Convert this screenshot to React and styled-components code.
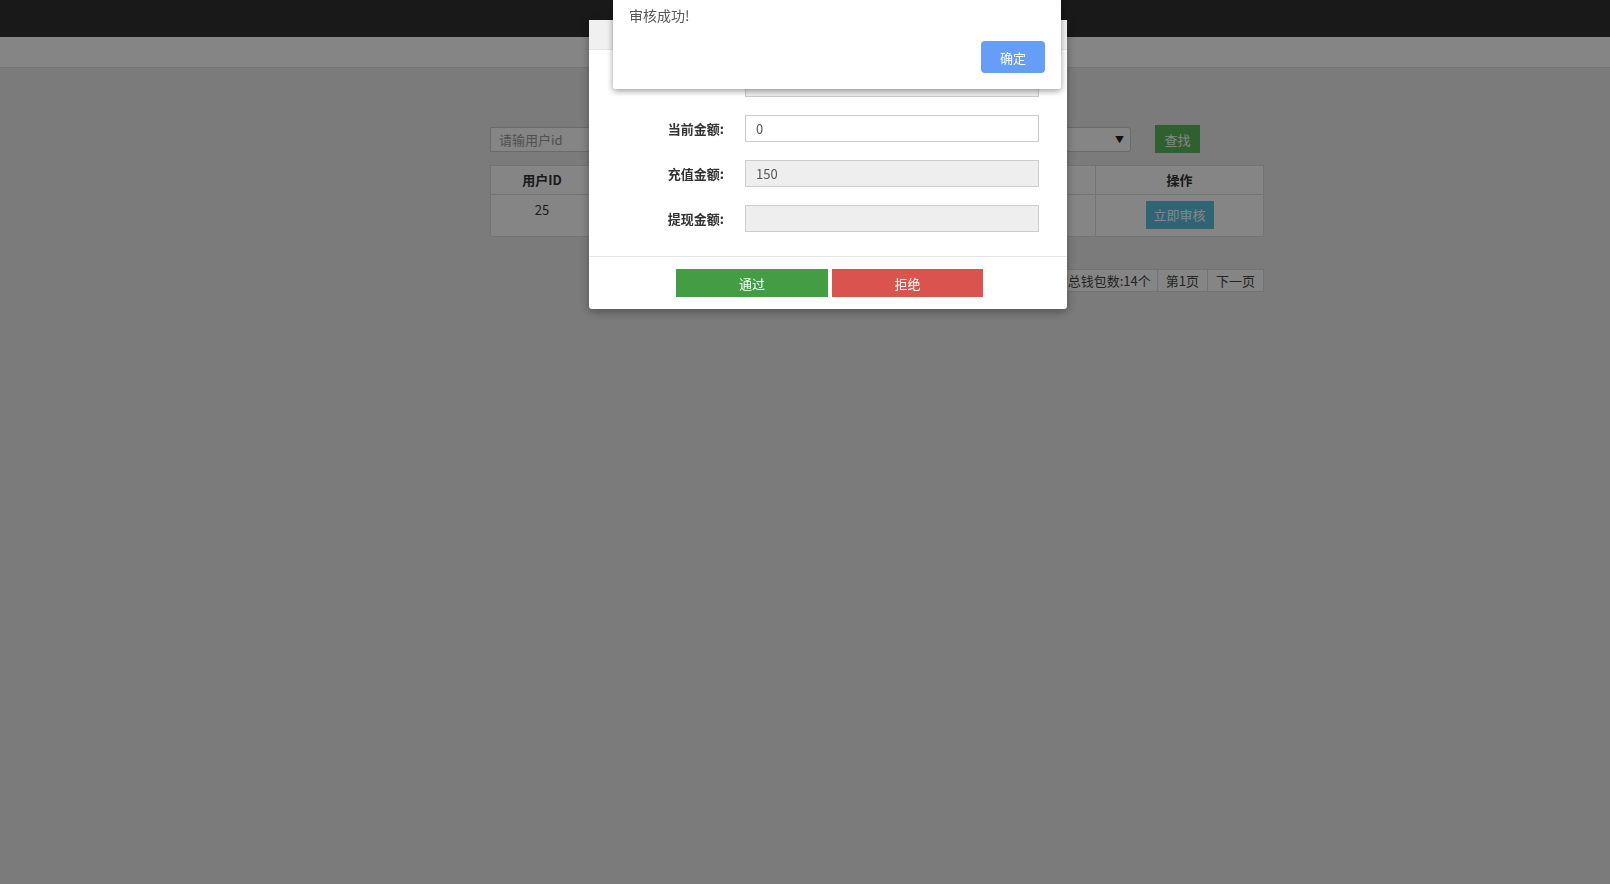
import React from 'react'
import styled, { createGlobalStyle } from 'styled-components'

const Global = createGlobalStyle`
  html, body {
    margin: 0;
    padding: 0;
    background: #ececec;
    font-family: "Noto Sans CJK SC", "Liberation Sans", sans-serif;
    font-size: 13px;
    color: #333;
  }
`

const Header = styled.div`
  height: 37px;
  background: #303030;
`

const SubBar = styled.div`
  height: 30px;
  background: #fff;
  border-bottom: 1px solid #e2e2e2;
`

const Content = styled.div`
  width: 774px;
  margin: 57px 0 0 490px;
`

const SearchRow = styled.div`
  display: flex;
  align-items: center;
  padding-right: 64px;
  height: 28px;
`

const SearchInput = styled.input`
  width: 230px;
  height: 25px;
  box-sizing: border-box;
  border: 1px solid #ccc;
  padding: 0 8px;
  font: inherit;
  color: #555;
  &::placeholder { color: #999; }
`

const Select = styled.div`
  flex: 1;
  margin-left: 12px;
  height: 25px;
  box-sizing: border-box;
  border: 1px solid #ccc;
  border-radius: 3px;
  background: #fff;
  display: flex;
  justify-content: flex-end;
  align-items: center;
  padding-right: 6px;
  font-size: 9px;
  color: #222;
`

const Button = styled.button`
  border: none;
  color: #fff;
  font: inherit;
  font-size: 13px;
  background: ${p => p.$bg};
  width: ${p => p.$w}px;
  height: ${p => p.$h}px;
  border-radius: ${p => p.$r || 0}px;
  padding: 0;
  cursor: pointer;
`

const Table = styled.table`
  width: 100%;
  margin-top: 12px;
  border-collapse: collapse;
  background: #fff;
  th, td {
    border: 1px solid #ddd;
    text-align: center;
    vertical-align: top;
    padding: 0;
  }
  th {
    height: 28px;
    line-height: 18px;
    font-weight: 700;
    vertical-align: middle;
  }
  td {
    height: 42px;
    padding-top: 6px;
    box-sizing: border-box;
    line-height: 18px;
  }
`

const Pager = styled.div`
  display: flex;
  justify-content: flex-end;
  margin-top: 32px;
`

const PageItem = styled.span`
  height: 23px;
  line-height: 22px;
  box-sizing: border-box;
  padding: 0 ${p => p.$pad || 8}px;
  border: 1px solid #ddd;
  margin-left: -1px;
  background: #fff;
  color: #444;
`

const Overlay = styled.div`
  position: fixed;
  inset: 0;
  background: rgba(0, 0, 0, 0.48);
`

const Modal = styled.div`
  position: fixed;
  left: 589px;
  top: 20px;
  width: 478px;
  background: #fff;
  border-radius: 0 0 3px 3px;
  box-shadow: 0 3px 10px rgba(0, 0, 0, 0.35);
`

const ModalHead = styled.div`
  height: 29px;
  background: #f0f0f0;
  border-bottom: 1px solid #e5e5e5;
`

const ModalBody = styled.div`
  display: grid;
  grid-template-columns: 135px 294px;
  column-gap: 21px;
  row-gap: 18px;
  padding: 20px 0 24px;
  border-bottom: 1px solid #e5e5e5;
`

const Label = styled.label`
  text-align: right;
  font-weight: 700;
  line-height: 27px;
  color: #333;
`

const Field = styled.div`
  height: 27px;
  box-sizing: border-box;
  border: 1px solid #ccc;
  background: ${p => (p.$disabled ? '#eee' : '#fff')};
  padding: 0 10px;
  line-height: 25px;
  color: #555;
`

const ModalFoot = styled.div`
  display: flex;
  justify-content: center;
  gap: 4px;
  padding: 12px 0 12px 3px;
`

const Alert = styled.div`
  position: fixed;
  left: 613px;
  top: 0;
  width: 448px;
  height: 89px;
  box-sizing: border-box;
  background: #fff;
  border-radius: 0 0 2px 2px;
  box-shadow: 0 2px 6px rgba(0, 0, 0, 0.4);
  padding: 4px 16px 16px;
  display: flex;
  flex-direction: column;
  justify-content: space-between;
`

const AlertText = styled.div`
  font-size: 14px;
  color: #555;
  line-height: 22px;
`

const AlertActions = styled.div`
  display: flex;
  justify-content: flex-end;
`

const cols = [
  { title: '用户ID', w: 103, v: '25' },
  { title: '用户名', w: 80, v: 'test' },
  { title: '当前金额', w: 80, v: '0' },
  { title: '充值金额', w: 80, v: '150' },
  { title: '提现金额', w: 80, v: '0' },
  { title: '申请时间', w: 83, v: '2018-01-01' },
  { title: '状态', w: 100, v: '待审核' },
]

const fields = [
  { label: '', value: '25', disabled: true },
  { label: '当前金额:', value: '0' },
  { label: '充值金额:', value: '150', disabled: true },
  { label: '提现金额:', value: '', disabled: true },
]

export default function App() {
  return (
    <>
      <Global />
      <Header />
      <SubBar />
      <Content>
        <SearchRow>
          <SearchInput placeholder="请输用户id" />
          <Select>▼</Select>
          <Button $bg="#5cb85c" $w={45} $h={28} style={{ marginLeft: 24 }}>查找</Button>
        </SearchRow>
        <Table>
          <colgroup>
            {cols.map(c => <col key={c.title} style={{ width: c.w }} />)}
            <col style={{ width: 168 }} />
          </colgroup>
          <thead>
            <tr>
              {cols.map(c => <th key={c.title}>{c.title}</th>)}
              <th>操作</th>
            </tr>
          </thead>
          <tbody>
            <tr>
              {cols.map(c => <td key={c.title}>{c.v}</td>)}
              <td><Button $bg="#5bc0de" $w={68} $h={28}>立即审核</Button></td>
            </tr>
          </tbody>
        </Table>
        <Pager>
          <PageItem $pad={6}>共1页 总钱包数:14个</PageItem>
          <PageItem>第1页</PageItem>
          <PageItem>下一页</PageItem>
        </Pager>
      </Content>
      <Overlay />
      <Modal>
        <ModalHead />
        <ModalBody>
          {fields.map((f, i) => (
            <React.Fragment key={i}>
              <Label>{f.label}</Label>
              <Field $disabled={f.disabled}>{f.value}</Field>
            </React.Fragment>
          ))}
        </ModalBody>
        <ModalFoot>
          <Button $bg="#449d44" $w={152} $h={28}>通过</Button>
          <Button $bg="#d9534f" $w={151} $h={28}>拒绝</Button>
        </ModalFoot>
      </Modal>
      <Alert>
        <AlertText>审核成功!</AlertText>
        <AlertActions>
          <Button $bg="#669df6" $w={64} $h={32} $r={4}>确定</Button>
        </AlertActions>
      </Alert>
    </>
  )
}
